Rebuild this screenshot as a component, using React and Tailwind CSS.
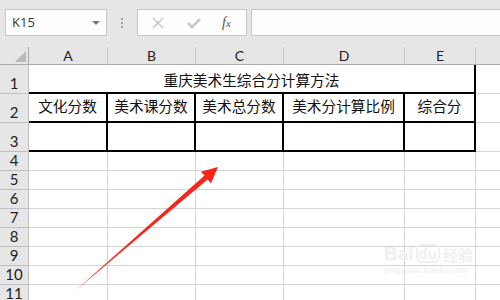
const cols = ["A", "B", "C", "D", "E"];
const headers = ["文化分数", "美术课分数", "美术总分数", "美术分计算比例", "综合分"];
const smallRows = [4, 5, 6, 7, 8, 9, 10, 11];

const gridCols = "grid grid-cols-[29px_79px_88px_88px_121px_71px_1fr]";

function RowHead({ n, h }) {
  return (
    <div
      className={`${h} flex items-end justify-center bg-[#e6e6e6] border-r border-b border-[#bfbfbf] text-[15px] leading-none pb-[2px] text-[#222]`}
      style={{ fontFamily: "Lato, 'Liberation Sans', sans-serif" }}
    >
      {n}
    </div>
  );
}

function Toolbar() {
  return (
    <div className="h-[47px] bg-[#e6e6e6] flex items-start pt-[9px] pl-[5px]">
      {/* name box */}
      <div className="w-[102px] h-[27px] bg-[#fdfdfd] border border-[#c6c6c6] flex items-center justify-between pl-[6px] pr-[6px]">
        <span className="text-[13px] text-[#333]" style={{ fontFamily: "'Open Sans', 'Noto Sans', sans-serif" }}>
          K15
        </span>
        <span className="w-0 h-0 border-l-[4px] border-r-[4px] border-t-[4px] border-l-transparent border-r-transparent border-t-[#777]" />
      </div>
      {/* dots */}
      <div className="w-[30px] h-[27px] flex flex-col items-center justify-center gap-[2px]">
        <span className="w-[2px] h-[2px] bg-[#a0a0a0]" />
        <span className="w-[2px] h-[2px] bg-[#a0a0a0]" />
        <span className="w-[2px] h-[2px] bg-[#a0a0a0]" />
      </div>
      {/* formula buttons */}
      <div className="w-[110px] h-[27px] bg-[#fdfdfd] border border-[#c6c6c6] flex items-center">
        <svg width="14" height="14" viewBox="0 0 14 14" className="ml-[13px]">
          <path d="M2 2 L12 12 M12 2 L2 12" stroke="#c4c4c4" strokeWidth="1.4" />
        </svg>
        <svg width="16" height="14" viewBox="0 0 16 14" className="ml-[21px]">
          <path d="M2 7 L6 11 L14 3" stroke="#c4c4c4" strokeWidth="2.4" fill="none" />
        </svg>
        <span
          className="ml-[20px] text-[14px] italic text-[#555]"
          style={{ fontFamily: "'Liberation Serif', serif" }}
        >
          f<span className="text-[11px]">x</span>
        </span>
      </div>
      {/* formula bar */}
      <div className="flex-1 h-[27px] ml-[4px] bg-[#fdfdfd] border border-[#c6c6c6] border-r-0" />
    </div>
  );
}

export default function App() {
  const cjk = { fontFamily: "'Noto Sans CJK SC', sans-serif" };
  return (
    <div className="relative w-[500px] h-[300px] overflow-hidden bg-white">
      <Toolbar />

      {/* column headers */}
      <div className={`${gridCols} h-[18px]`}>
        <div className="bg-[#e6e6e6] border-r border-b border-[#ababab] flex items-end justify-end pr-[2px] pb-[2px]">
          <svg width="11" height="11" viewBox="0 0 11 11">
            <polygon points="11,0 11,11 0,11" fill="#b9b9b9" />
          </svg>
        </div>
        {cols.map((c) => (
          <div
            key={c}
            className="bg-[#e6e6e6] border-r border-[#c8c8c8] border-b border-b-[#ababab] flex items-end justify-center text-[14px] leading-none pb-[1px] text-[#222]"
            style={{ fontFamily: "Lato, 'Liberation Sans', sans-serif" }}
          >
            {c}
          </div>
        ))}
        <div className="bg-[#e6e6e6] border-b border-[#ababab]" />
      </div>

      {/* row 1 */}
      <div className={`${gridCols} h-[29px]`}>
        <RowHead n={1} h="h-[29px]" />
        <div
          className="col-span-5 border-r-2 border-b-2 border-black flex items-center justify-center pt-[2px] text-[14.67px] text-[#111]"
          style={cjk}
        >
          重庆美术生综合分计算方法
        </div>
        <div className="border-b border-[#d4d4d4]" />
      </div>

      {/* row 2 */}
      <div className={`${gridCols} h-[29px]`}>
        <RowHead n={2} h="h-[29px]" />
        {headers.map((t) => (
          <div
            key={t}
            className="border-r-2 border-b-2 border-black flex items-center justify-center pb-[4px] text-[14.67px] text-[#111]"
            style={cjk}
          >
            {t}
          </div>
        ))}
        <div className="border-b border-[#d4d4d4]" />
      </div>

      {/* row 3 */}
      <div className={`${gridCols} h-[29px]`}>
        <RowHead n={3} h="h-[29px]" />
        {cols.map((c) => (
          <div key={c} className="border-r-2 border-b-2 border-black" />
        ))}
        <div className="border-b border-[#d4d4d4]" />
      </div>

      {/* rows 4+ */}
      {smallRows.map((r) => (
        <div key={r} className={`${gridCols} h-[19px]`}>
          <RowHead n={r} h="h-[19px]" />
          {cols.map((c) => (
            <div key={c} className="border-r border-b border-[#d4d4d4]" />
          ))}
          <div className="border-b border-[#d4d4d4]" />
        </div>
      ))}

      {/* watermark */}
      <div className="absolute left-[384px] top-[244px] flex flex-col items-start pointer-events-none">
        <div className="flex items-end leading-none text-[#f0f0f0] font-bold" style={{ fontFamily: "'Liberation Sans', 'Noto Sans CJK SC', sans-serif" }}>
          <span className="text-[19px]">Bai</span>
          <span className="text-[15px] ml-[2px] border-2 border-[#f0f0f0] rounded-[6px] px-[1px] leading-none">du</span>
          <span className="text-[15px] ml-[3px]">经验</span>
        </div>
        <div className="text-[9px] leading-none mt-[3px] text-[#f2f2f2] font-bold" style={{ fontFamily: "'Liberation Sans', sans-serif" }}>
          jingyuan.baidu.com
        </div>
      </div>

      {/* red arrow annotation */}
      <svg className="absolute left-0 top-0 pointer-events-none" width="500" height="300" viewBox="0 0 500 300">
        <polygon
          points="75,291 204.5,175.4 200.8,171.8 218,167 211,183.2 207.6,179.6"
          fill="#f8261a"
        />
      </svg>
    </div>
  );
}
